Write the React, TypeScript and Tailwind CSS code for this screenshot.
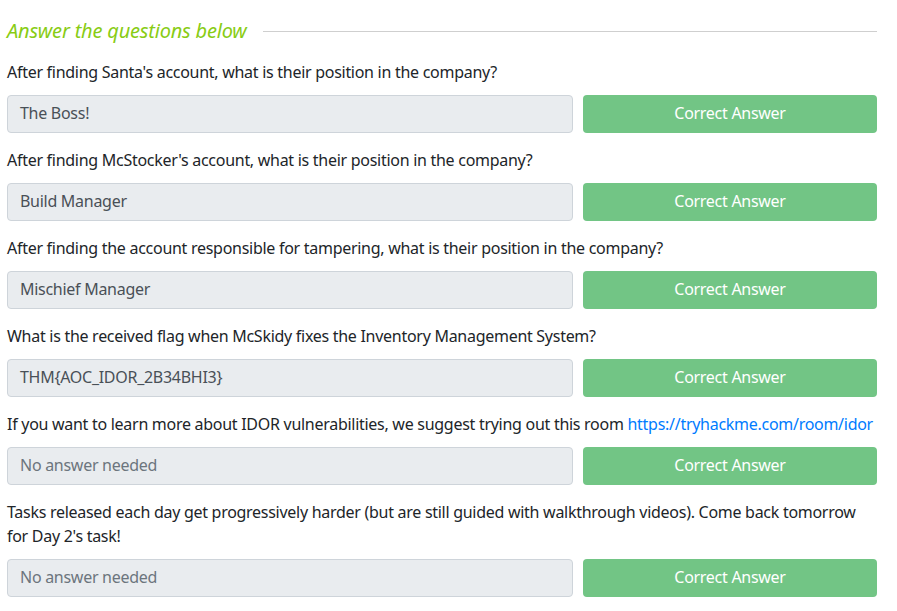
import React from "react";

type Question = {
    text: React.ReactNode;
    answer: string;
    placeholder?: boolean;
    nowrap?: boolean;
};

const questions: Question[] = [
    {
        text: "After finding Santa's account, what is their position in the company?",
        answer: "The Boss!",
    },
    {
        text: "After finding McStocker's account, what is their position in the company?",
        answer: "Build Manager",
    },
    {
        text: "After finding the account responsible for tampering, what is their position in the company?",
        answer: "Mischief Manager",
    },
    {
        text: "What is the received flag when McSkidy fixes the Inventory Management System?",
        answer: "THM{AOC_IDOR_2B34BHI3}",
    },
    {
        text: (
            <>
                If you want to learn more about IDOR vulnerabilities, we suggest trying out this room{" "}
                <a href="#" className="text-[#007bff]">
                    https://tryhackme.com/room/idor
                </a>
            </>
        ),
        answer: "No answer needed",
        placeholder: true,
        nowrap: true,
    },
    {
        text: "Tasks released each day get progressively harder (but are still guided with walkthrough videos). Come back tomorrow for Day 2's task!",
        answer: "No answer needed",
        placeholder: true,
    },
];

export default function App() {
    return (
        <div
            className="w-[897px] h-[611px] bg-white pl-[7px] pr-[20px] overflow-hidden tracking-[-0.28px]"
            style={{ fontFamily: '"Noto Sans", "Open Sans", sans-serif' }}
        >
            <div className="flex items-center gap-4 pt-[19px] mb-[17px]">
                <h4 className="text-[20px] leading-6 italic text-[#88cc14] whitespace-nowrap tracking-[-0.2px]">
                    Answer the questions below
                </h4>
                <div className="flex-1 h-px bg-[#cfcfcf]" />
            </div>

            {questions.map((q, i) => (
                <div key={i} className="mb-[15px]">
                    <p
                        className={
                            "text-[16px] leading-6 text-[#212529] mb-[11px] " +
                            (q.nowrap ? "whitespace-nowrap" : "")
                        }
                    >
                        {q.text}
                    </p>
                    <div className="flex gap-[10px]">
                        <div
                            className={
                                "w-[566px] h-[38px] flex items-center px-3 pb-[2px] rounded bg-[#e9ecef] border border-[#ced4da] text-[16px] " +
                                (q.placeholder ? "text-[#6c757d]" : "text-[#495057]")
                            }
                        >
                            {q.answer}
                        </div>
                        <button className="flex-1 h-[38px] pb-[2px] rounded bg-[#72c585] text-white text-[16px]">
                            Correct Answer
                        </button>
                    </div>
                </div>
            ))}
        </div>
    );
}
